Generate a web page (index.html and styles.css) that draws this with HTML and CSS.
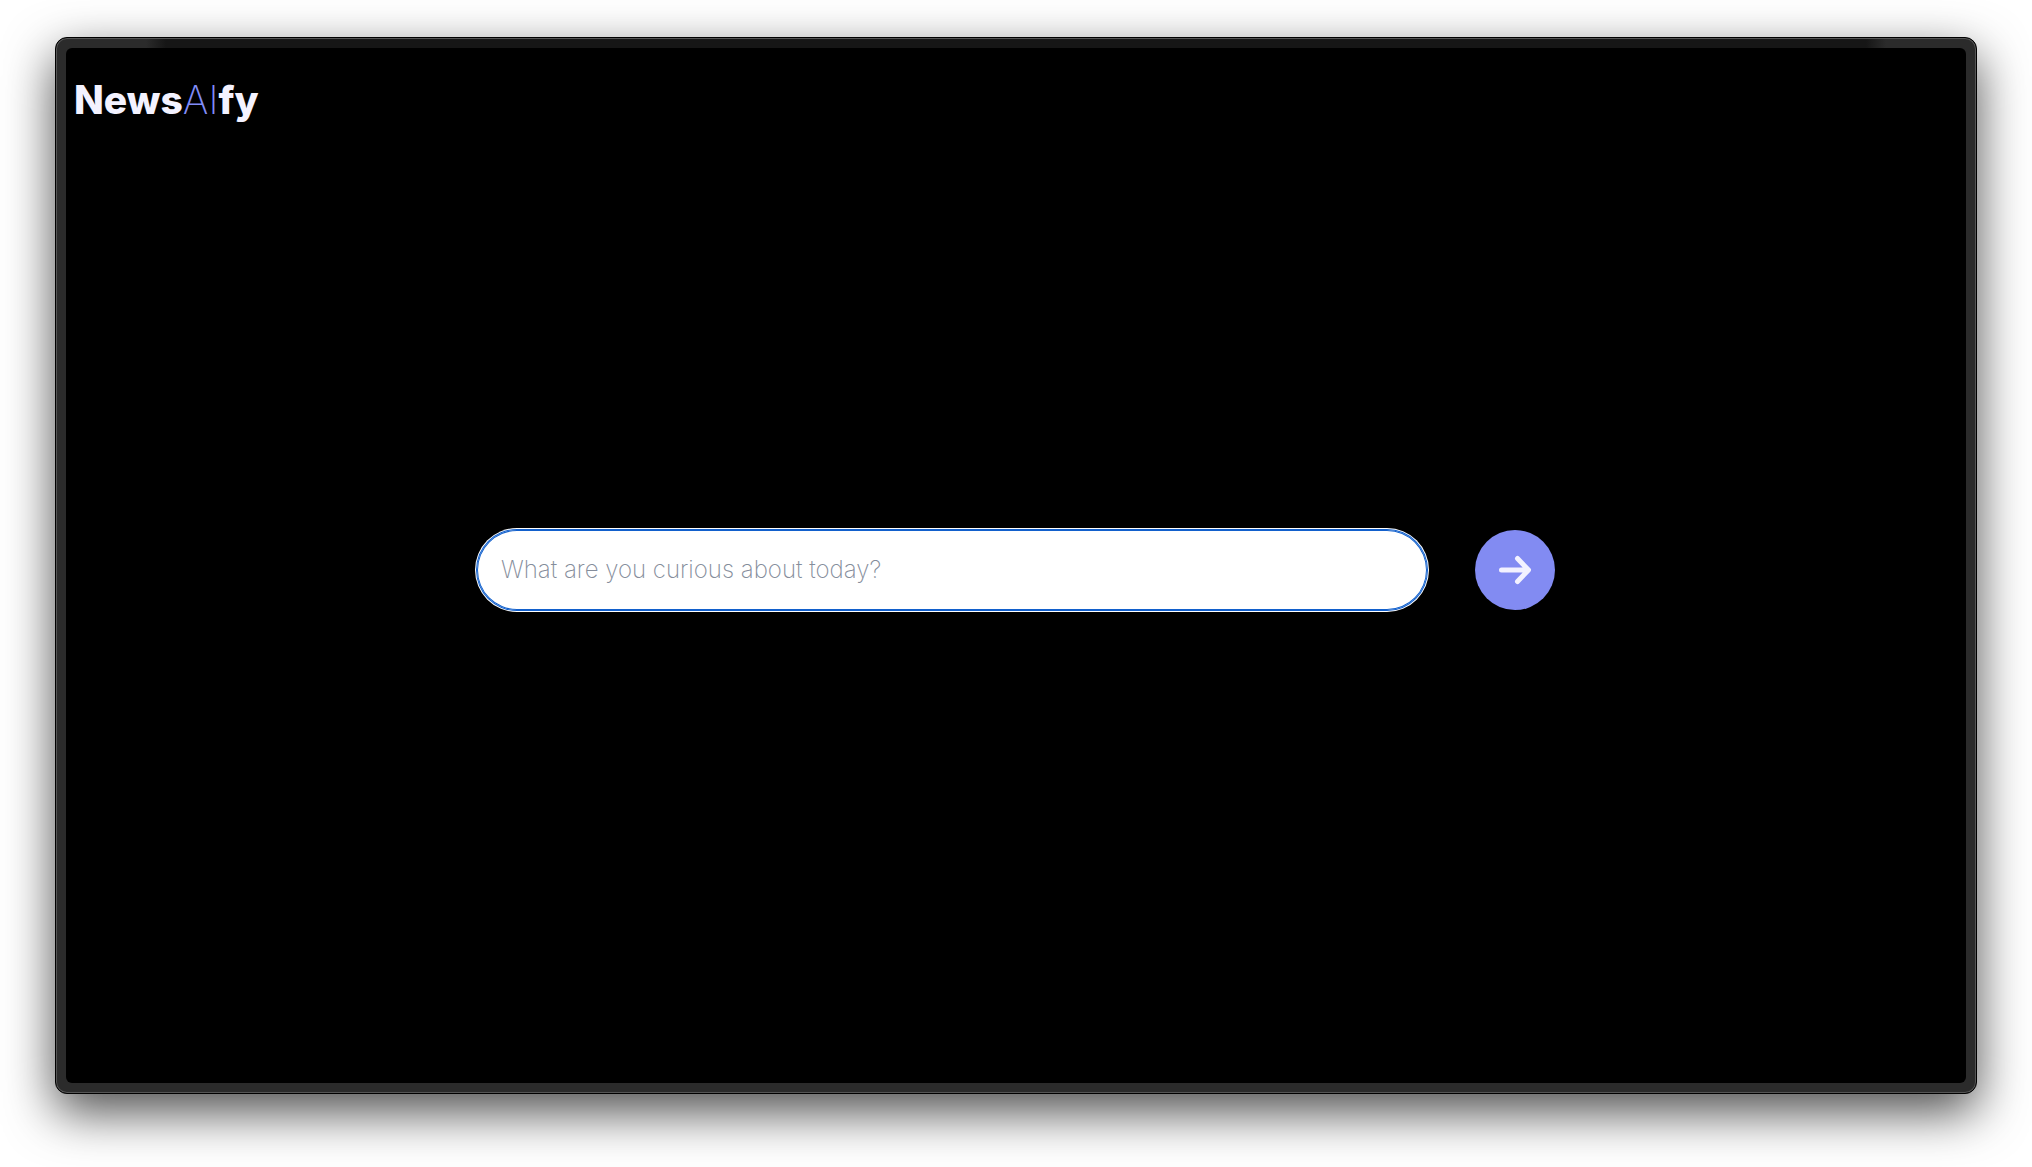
FILE: index.html
```html
<!DOCTYPE html>
<html lang="en">
<head>
  <meta charset="utf-8">
  <meta name="viewport" content="width=device-width, initial-scale=1">
  <title>NewsAIfy</title>
  <link rel="stylesheet" href="styles.css">
</head>
<body>
  <div class="window">
    <div class="screen">
      <header class="header">
        <h1 class="logo">News<span class="logo-accent">AI</span>fy</h1>
      </header>
      <main class="main">
        <form class="search">
          <input class="search-input" type="text" placeholder="What are you curious about today?" aria-label="What are you curious about today?">
          <button class="search-button" type="submit" aria-label="Search">
            <svg class="search-icon" viewBox="0 0 40 40" aria-hidden="true">
              <path d="M6.5 20H33M22.5 8.5L33.5 20L22.5 31.5"/>
            </svg>
          </button>
        </form>
      </main>
    </div>
  </div>
</body>
</html>
```

FILE: styles.css
```css
* {
  box-sizing: border-box;
}

body {
  margin: 0;
  min-height: 100vh;
  padding: 37px 55px 73px;
  display: flex;
  background: #fff;
  font-family: Inter, "Liberation Sans", sans-serif;
  overflow: hidden;
}

.window {
  flex: 1;
  display: flex;
  padding: 9px;
  border: 1px solid #000;
  border-radius: 12px;
  background: linear-gradient(90deg, #2b2b2b 90px, #161616 110px, #161616 calc(100% - 110px), #2b2b2b calc(100% - 90px)) top / 100% 20px no-repeat #2b2b2b;
  box-shadow: inset 0 0 0 1px #555, 0 18px 50px rgba(0, 0, 0, 0.7);
}

.screen {
  flex: 1;
  display: flex;
  flex-direction: column;
  margin: 1px;
  border-radius: 6px;
  background: #000;
}

.header {
  padding: 28px 8px 0;
}

.logo {
  margin: 0;
  font-size: 39px;
  line-height: 48px;
  font-weight: 800;
  color: #f3f2ff;
}

.logo-accent {
  font-weight: 200;
  color: #818cf8;
}

.main {
  flex: 1;
  display: flex;
  align-items: center;
  justify-content: center;
  padding-bottom: 68px;
}

.search {
  flex: 1;
  display: flex;
  justify-content: center;
  gap: 48px;
}

.search-input {
  width: 50%;
  height: 80px;
  padding: 0 24px;
  border: 0;
  border-radius: 40px;
  outline: none;
  background: #fff;
  box-shadow: inset 0 0 0 1px #1260cc, 0 0 0 1px #1260cc, 0 0 0 2px #fff;
  color: #111827;
  font: 200 24px/32px Inter, "Liberation Sans", sans-serif;
}

.search-input::placeholder {
  color: #858d9b;
  opacity: 1;
}

.search-button {
  flex: none;
  display: grid;
  place-items: center;
  width: 80px;
  height: 80px;
  padding: 0;
  border: 0;
  border-radius: 50%;
  background: #828bf2;
  color: #f3f2ff;
}

.search-icon {
  width: 40px;
  height: 40px;
  fill: none;
  stroke: currentColor;
  stroke-width: 5;
  stroke-linecap: round;
  stroke-linejoin: round;
}
```
